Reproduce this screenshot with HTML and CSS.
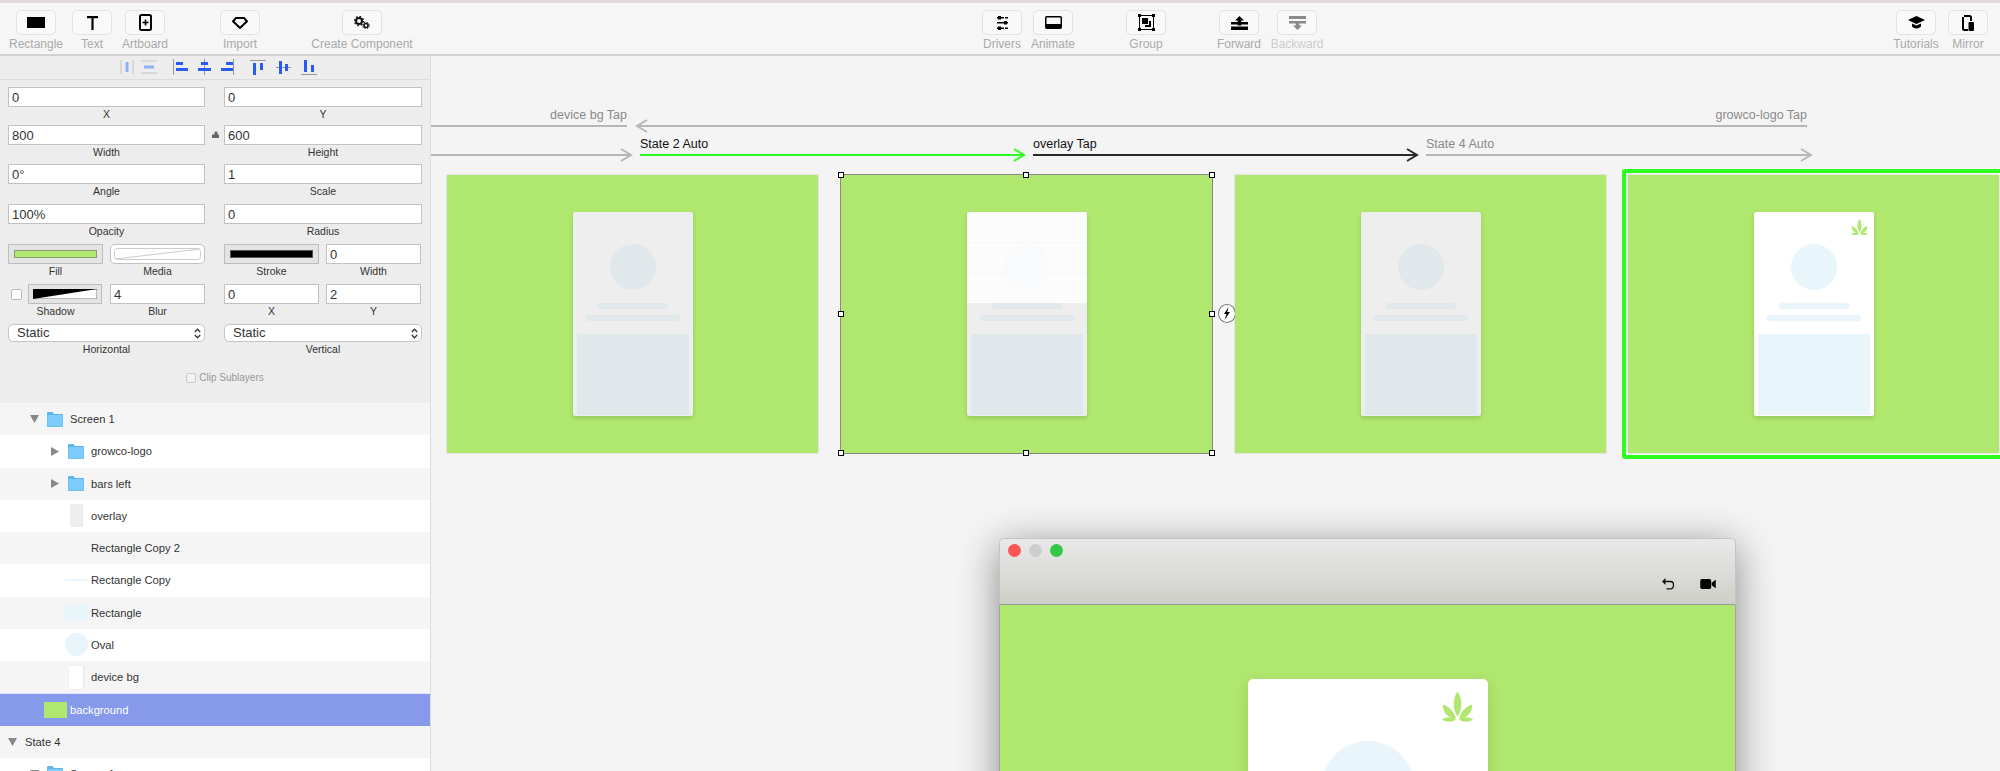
FILE: index.html
```html
<!DOCTYPE html>
<html lang="en">
<head>
    <meta charset="UTF-8">
    <title>Prototype Editor</title>
    <link rel="stylesheet" href="styles.css">
</head>
<body>
    <svg class="defs" width="0" height="0">
        <symbol id="leaf" viewBox="0 0 31 30">
            <path d="M15.5 0C20.500 7 20.500 18 15.500 25C10.500 18 10.500 7 15.500 0Z"/>
            <path d="M17 27C19 20 24 15 30 13C31 20 25 27 17 27Z"/>
            <path d="M14 27C12 20 7 15 1 13C0 20 6 27 14 27Z"/>
            <path d="M17 28C21 25 27 25 31 28C27 31 21 31 17 28Z"/>
            <path d="M14 28C10 25 4 25 0 28C4 31 10 31 14 28Z"/>
        </symbol>
        <symbol id="folder" viewBox="0 0 16 15">
            <path d="M0 1.5C0 .7.5 0 1.300 0H5.500L7 2H15C15.600 2 16 2.400 16 3V14C16 14.600 15.600 15 15 15H1C.4 15 0 14.600 0 14Z" fill="#5eb4ec"/>
            <rect x=".5" y="3" width="15" height="11.500" rx=".5" fill="#7ccbfa"/>
        </symbol>
        <symbol id="tri-down" viewBox="0 0 9 8"><path d="M0 0H9L4.500 8Z"/></symbol>
        <symbol id="tri-right" viewBox="0 0 8 9"><path d="M0 0L8 4.500L0 9Z"/></symbol>
    </svg>

    <div class="title-strip"></div>

    <!-- Top toolbar -->
    <header class="toolbar">
        <div class="tool sp-16">
            <div class="tool-btn"><svg width="18" height="11" viewBox="0 0 18 11"><rect width="18" height="11"/></svg></div>
            <span>Rectangle</span>
        </div>
        <div class="tool sp-16">
            <div class="tool-btn"><svg width="13" height="14" viewBox="0 0 13 14"><path d="M1 0H12V2.200H7.600V14H5.400V2.200H1Z"/></svg></div>
            <span>Text</span>
        </div>
        <div class="tool sp-13">
            <div class="tool-btn"><svg width="13" height="17" viewBox="0 0 13 17"><rect x="1" y="1" width="11" height="15" rx="1.500" fill="none" stroke="#000" stroke-width="2"/><path d="M5.700 5.500H7.300V7.700H9.500V9.300H7.300V11.500H5.700V9.300H3.500V7.700H5.700Z"/></svg></div>
            <span>Artboard</span>
        </div>
        <div class="tool sp-55">
            <div class="tool-btn"><svg width="16" height="12" viewBox="0 0 16 12"><path d="M4 1H12L15 4.300L8 11L1 4.300Z" fill="none" stroke="#000" stroke-width="2"/></svg></div>
            <span>Import</span>
        </div>
        <div class="tool sp-82">
            <div class="tool-btn"><svg width="16" height="13" viewBox="0 0 16 13"><circle cx="5" cy="5" r="3" fill="none" stroke="#111" stroke-width="2"/><circle cx="5" cy="5" r="4.600" fill="none" stroke="#111" stroke-width="1.300" stroke-dasharray="1.600 2"/><circle cx="12" cy="9.500" r="2" fill="none" stroke="#111" stroke-width="1.600"/><circle cx="12" cy="9.500" r="3.300" fill="none" stroke="#111" stroke-width="1" stroke-dasharray="1.300 1.300"/></svg></div>
            <span>Create Component</span>
        </div>

        <div class="tool sp-600">
            <div class="tool-btn"><svg width="11" height="14" viewBox="0 0 11 14"><path d="M1 0H4V1H7V2.500H4V3.500H1V2.500H0V1H1ZM7 5H10V6H11V7.500H10V8.500H7V7.500H0V6H7ZM1 10.500H4V11.500H7V13H4V14H1V13H0V11.500H1Z"/><path d="M8 1H11V2.500H8ZM8 11.500H11V13H8Z"/></svg></div>
            <span>Drivers</span>
        </div>
        <div class="tool sp-11">
            <div class="tool-btn"><svg width="17" height="13" viewBox="0 0 17 13"><rect x=".75" y=".75" width="15.500" height="11.500" rx="1" fill="none" stroke="#000" stroke-width="1.500"/><rect x="1" y="8" width="15" height="4"/></svg></div>
            <span>Animate</span>
        </div>
        <div class="tool sp-53">
            <div class="tool-btn"><svg width="17" height="17" viewBox="0 0 17 17"><rect x="1.500" y="1.500" width="14" height="14" fill="none" stroke="#000"/><path d="M0 0H3V3H0ZM14 0H17V3H14ZM0 14H3V17H0ZM14 14H17V17H14Z"/><rect x="4" y="4" width="6" height="6"/><path d="M11 7H13V13H7V11H11Z"/></svg></div>
            <span>Group</span>
        </div>
        <div class="tool sp-53">
            <div class="tool-btn"><svg width="17" height="14" viewBox="0 0 17 14"><path d="M8.500 0L13 4.500H10.300V6H17V8.500H10.300V9.500H6.700V8.500H0V6H6.700V4.500H4Z"/><rect y="10.500" width="17" height="3.500"/></svg></div>
            <span>Forward</span>
        </div>
        <div class="tool sp-18 tool-off">
            <div class="tool-btn"><svg width="17" height="14" viewBox="0 0 17 14"><rect width="17" height="3"/><path d="M0 5H17V7.500H10.300V9.500H13L8.500 14L4 9.500H6.700V7.500H0Z"/></svg></div>
            <span>Backward</span>
        </div>

        <div class="tool sp-579">
            <div class="tool-btn"><svg width="17" height="13" viewBox="0 0 17 13"><path d="M8.500 0L17 4L8.500 8L0 4Z"/><path d="M4 7.500L8.500 9.500L13 7.500V10.500C11 13 6 13 4 10.500Z"/></svg></div>
            <span>Tutorials</span>
        </div>
        <div class="tool sp-12">
            <div class="tool-btn"><svg width="12" height="16" viewBox="0 0 12 16"><path d="M2 1H7.500C8.500 1 9 1.500 9 2.500V6" fill="none" stroke="#000" stroke-width="2"/><path d="M1 2V13.500C1 14.500 1.500 15 2.500 15H6" fill="none" stroke="#000" stroke-width="2"/><rect x="6.500" y="7" width="5.500" height="9" rx="1"/></svg></div>
            <span>Mirror</span>
        </div>
    </header>

    <div class="workspace">
        <aside class="sidebar">
            <section class="inspector">
                <div class="align-bar">
                    <svg class="al-first off" width="14" height="16" viewBox="0 0 14 16"><path d="M1 1V15M13 1V15" stroke="#c4c4c4" fill="none"/><rect x="5.500" y="3" width="3" height="10" fill="#8fb2f5"/></svg>
                    <svg class="off" width="16" height="14" viewBox="0 0 16 14"><path d="M0 1H16M0 13H16" stroke="#c4c4c4" fill="none"/><rect x="3" y="5.500" width="10" height="3" fill="#8fb2f5"/></svg>
                    <svg class="al-gap" width="15" height="16" viewBox="0 0 15 16"><path d="M.5 0V16" stroke="#999" fill="none"/><rect x="3" y="3" width="7" height="3" fill="#2a5cf2"/><rect x="3" y="9" width="12" height="3" fill="#2a5cf2"/></svg>
                    <svg width="13" height="16" viewBox="0 0 13 16"><path d="M6.500 0V16" stroke="#999" fill="none"/><rect x="3" y="3" width="7" height="3" fill="#2a5cf2"/><rect x="0" y="9" width="13" height="3" fill="#2a5cf2"/></svg>
                    <svg width="13" height="16" viewBox="0 0 13 16"><path d="M12.500 0V16" stroke="#999" fill="none"/><rect x="5" y="3" width="7" height="3" fill="#2a5cf2"/><rect x="0" y="9" width="12" height="3" fill="#2a5cf2"/></svg>
                    <svg class="al-gap" width="16" height="15" viewBox="0 0 16 15"><path d="M0 .5H16" stroke="#999" fill="none"/><rect x="3" y="3" width="3" height="12" fill="#2a5cf2"/><rect x="10" y="3" width="3" height="7" fill="#2a5cf2"/></svg>
                    <svg width="15" height="15" viewBox="0 0 15 15"><path d="M0 7.500H15" stroke="#999" fill="none"/><rect x="3" y="1" width="3" height="13" fill="#2a5cf2"/><rect x="9" y="4" width="3" height="7" fill="#2a5cf2"/></svg>
                    <svg width="16" height="15" viewBox="0 0 16 15"><path d="M0 14.500H16" stroke="#999" fill="none"/><rect x="3" y="0" width="3" height="12" fill="#2a5cf2"/><rect x="10" y="5" width="3" height="7" fill="#2a5cf2"/></svg>
                </div>

                <div class="props">
                    <div class="prop-row row-38">
                        <label class="field"><input value="0"><span>X</span></label>
                        <label class="field"><input value="0"><span>Y</span></label>
                    </div>
                    <div class="prop-row row-39">
                        <label class="field"><input value="800"><span>Width</span></label>
                        <label class="field"><input value="600"><span>Height</span></label>
                        <svg class="lock" width="7" height="7" viewBox="0 0 7 7"><path d="M2.500 3.500V1.800C2.500 .8 3.200 .5 4 .5S5.500 .8 5.500 1.800V3.500H7V7H0V3.500Z" fill="#666"/></svg>
                    </div>
                    <div class="prop-row">
                        <label class="field"><input value="0°"><span>Angle</span></label>
                        <label class="field"><input value="1"><span>Scale</span></label>
                    </div>
                    <div class="prop-row">
                        <label class="field"><input value="100%"><span>Opacity</span></label>
                        <label class="field"><input value="0"><span>Radius</span></label>
                    </div>
                    <div class="prop-row">
                        <div class="split">
                            <div class="field"><div class="swatch"><div class="swatch-fill"></div></div><span>Fill</span></div>
                            <div class="field">
                                <div class="media-well"><svg width="87" height="12" viewBox="0 0 87 12" preserveAspectRatio="none"><rect x=".5" y=".5" width="86" height="11" rx="3" fill="#fff" stroke="#ccc"/><path d="M1 11L86 1" stroke="#ccc" fill="none"/></svg></div>
                                <span>Media</span>
                            </div>
                        </div>
                        <div class="split">
                            <div class="field"><div class="swatch"><div class="swatch-stroke"></div></div><span>Stroke</span></div>
                            <label class="field"><input value="0"><span>Width</span></label>
                        </div>
                    </div>
                    <div class="prop-row">
                        <div class="split">
                            <div class="field">
                                <div class="shadow-cell">
                                    <div class="check"></div>
                                    <div class="swatch shadow-swatch"><svg width="64" height="10" viewBox="0 0 64 10" preserveAspectRatio="none"><rect width="64" height="10" fill="#fff" stroke="#777"/><path d="M0 0H64L0 10Z"/></svg></div>
                                </div>
                                <span>Shadow</span>
                            </div>
                            <label class="field"><input value="4"><span>Blur</span></label>
                        </div>
                        <div class="split">
                            <label class="field"><input value="0"><span>X</span></label>
                            <label class="field"><input value="2"><span>Y</span></label>
                        </div>
                    </div>
                    <div class="prop-row">
                        <div class="field">
                            <div class="select">Static<svg width="7" height="11" viewBox="0 0 7 11"><path d="M.8 4L3.500 1.200L6.200 4M.8 7L3.500 9.800L6.200 7" fill="none" stroke="#333" stroke-width="1.300"/></svg></div>
                            <span>Horizontal</span>
                        </div>
                        <div class="field">
                            <div class="select">Static<svg width="7" height="11" viewBox="0 0 7 11"><path d="M.8 4L3.500 1.200L6.200 4M.8 7L3.500 9.800L6.200 7" fill="none" stroke="#333" stroke-width="1.300"/></svg></div>
                            <span>Vertical</span>
                        </div>
                    </div>
                </div>

                <div class="clip"><div class="check check-off"></div>Clip Sublayers</div>
            </section>

            <!-- Layers -->
            <ul class="layers">
                <li class="layer lvl-1"><svg class="twisty" width="9" height="8"><use href="#tri-down"/></svg><div class="layer-icon"><svg width="16" height="15"><use href="#folder"/></svg></div>Screen 1</li>
                <li class="layer lvl-2"><svg class="twisty" width="8" height="9"><use href="#tri-right"/></svg><div class="layer-icon"><svg width="16" height="15"><use href="#folder"/></svg></div>growco-logo</li>
                <li class="layer lvl-2"><svg class="twisty" width="8" height="9"><use href="#tri-right"/></svg><div class="layer-icon"><svg width="16" height="15"><use href="#folder"/></svg></div>bars left</li>
                <li class="layer lvl-2"><span class="twisty"></span><div class="layer-icon"><div class="th th-overlay"></div></div>overlay</li>
                <li class="layer lvl-2"><span class="twisty"></span><div class="layer-icon"><div class="th th-line faint"></div></div>Rectangle Copy 2</li>
                <li class="layer lvl-2"><span class="twisty"></span><div class="layer-icon"><div class="th th-line"></div></div>Rectangle Copy</li>
                <li class="layer lvl-2"><span class="twisty"></span><div class="layer-icon"><div class="th th-rect"></div></div>Rectangle</li>
                <li class="layer lvl-2"><span class="twisty"></span><div class="layer-icon"><div class="th th-oval"></div></div>Oval</li>
                <li class="layer lvl-2"><span class="twisty"></span><div class="layer-icon"><div class="th th-device"></div></div>device bg</li>
                <li class="layer lvl-1 selected"><span class="twisty"></span><div class="layer-icon"><div class="th th-bg"></div></div>background</li>
                <li class="layer lvl-0"><svg class="twisty" width="9" height="8"><use href="#tri-down"/></svg>State 4</li>
                <li class="layer lvl-1"><svg class="twisty" width="9" height="8"><use href="#tri-down"/></svg><div class="layer-icon"><svg width="16" height="15"><use href="#folder"/></svg></div>Screen 1</li>
            </ul>
        </aside>

        <main class="canvas">
            <!-- Transition arrows -->
            <svg class="links" width="1569" height="110" viewBox="0 0 1569 110" fill="none" stroke-width="2">
                <g stroke="#b7b7b7">
                    <path d="M0 71H196"/>
                    <path d="M206 71H1376M216 65L206 71L216 77"/>
                    <path d="M0 100H200M190 94L200 100L190 106"/>
                    <path d="M995 100H1380M1370 94L1380 100L1370 106"/>
                </g>
                <path d="M209 100H593M583 94L593 100L583 106" stroke="#2cff1e"/>
                <path d="M602 100H986M976 94L986 100L976 106" stroke="#2a2a2a"/>
            </svg>
            <span class="link-text to-left link-device">device bg Tap</span>
            <span class="link-text to-left link-logo">growco-logo Tap</span>
            <span class="link-text on link-state2">State 2 Auto</span>
            <span class="link-text on link-overlay">overlay Tap</span>
            <span class="link-text link-state4">State 4 Auto</span>

            <!-- Artboards -->
            <div class="artboard art-1">
                <div class="device dim">
                    <div class="circle"></div><div class="bar bar-short"></div><div class="bar bar-long"></div><div class="block"></div>
                </div>
            </div>

            <div class="artboard art-2 picked">
                <div class="device dim">
                    <div class="circle"></div><div class="bar bar-short"></div><div class="bar bar-long"></div><div class="block"></div>
                    <div class="overlay"><div class="overlay-line line-a"></div><div class="overlay-line line-b"></div><div class="overlay-circle"></div></div>
                </div>
                <i class="handle h-tl"></i><i class="handle h-tc"></i><i class="handle h-tr"></i>
                <i class="handle h-ml"></i><i class="handle h-mr"></i>
                <i class="handle h-bl"></i><i class="handle h-bc"></i><i class="handle h-br"></i>
            </div>

            <div class="bolt"><svg width="8" height="13" viewBox="0 0 8 13"><path d="M5.500 0L1 7H3.500L1.500 13L7 5H4.300Z"/></svg></div>

            <div class="artboard art-3">
                <div class="device dim">
                    <div class="circle"></div><div class="bar bar-short"></div><div class="bar bar-long"></div><div class="block"></div>
                </div>
            </div>

            <div class="active-ring"></div>
            <div class="artboard art-4">
                <div class="device">
                    <svg class="device-logo" width="17" height="16"><use href="#leaf"/></svg>
                    <div class="circle"></div><div class="bar bar-short"></div><div class="bar bar-long"></div><div class="block"></div>
                </div>
            </div>

            <!-- Preview window -->
            <div class="preview">
                <div class="preview-bar">
                    <div class="lights"><i class="light red"></i><i class="light grey"></i><i class="light green"></i></div>
                    <div class="preview-tools">
                        <svg width="13" height="12" viewBox="0 0 13 12" fill="none"><path d="M2 3.500H8.500C10.500 3.500 11.500 5 11.500 7S10.500 10.800 8.500 10.800H4.500" stroke="#111" stroke-width="1.300"/><path d="M0 3.500L3.500 0V7Z" fill="#111"/></svg>
                        <svg width="16" height="10" viewBox="0 0 17 11"><rect width="12" height="11" rx="2"/><path d="M12.500 4L17 .8V10.200L12.500 7Z"/></svg>
                    </div>
                </div>
                <div class="preview-stage">
                    <div class="preview-device">
                        <svg class="preview-logo" width="31" height="31"><use href="#leaf"/></svg>
                        <div class="preview-circle"></div>
                    </div>
                </div>
            </div>
        </main>
    </div>
</body>
</html>
```

FILE: styles.css
```css
* {
    box-sizing: border-box;
}
html, body {
    height: 100%;
}
body {
    margin: 0;
    overflow: hidden;
    font-family: "Liberation Sans", Arial, sans-serif;
    color: #333;
    background: #f4f4f4;
}
.defs {
    position: absolute;
}
.title-strip {
    height: 3px;
    background: #e0d8dc;
}

/* Toolbar */
.toolbar {
    position: relative;
    z-index: 1;
    display: flex;
    height: 53px;
    margin-bottom: -1px;
    padding-top: 7px;
    background: #f6f6f6;
    border-bottom: 2px solid #d2d2d2;
}
.tool {
    display: flex;
    flex-direction: column;
    align-items: center;
    flex: none;
    width: 40px;
    font-size: 12px;
    line-height: 14px;
    color: #aaa;
    white-space: nowrap;
}
.tool span {
    margin-top: 2px;
}
.tool-btn {
    display: flex;
    align-items: center;
    justify-content: center;
    width: 40px;
    height: 25px;
    background: #f9f9f9;
    border: 1px solid #e2e2e2;
    border-radius: 5px;
}
.tool-off svg {
    fill: #8a8a8a;
}
.tool-off span {
    color: #ccc;
}
.sp-11 { margin-left: 11px; }
.sp-12 { margin-left: 12px; }
.sp-13 { margin-left: 13px; }
.sp-16 { margin-left: 16px; }
.sp-18 { margin-left: 18px; }
.sp-53 { margin-left: 53px; }
.sp-55 { margin-left: 55px; }
.sp-82 { margin-left: 82px; }
.sp-579 { margin-left: 579px; }
.sp-600 { margin-left: 600px; }

.workspace {
    display: flex;
    height: 716px;
}

/* Sidebar */
.sidebar {
    flex: none;
    width: 431px;
    display: flex;
    flex-direction: column;
    overflow: hidden;
    background: #fff;
    border-right: 1px solid #ddd;
}
.inspector {
    flex: none;
    height: 348px;
    background: #ededed;
}
.align-bar {
    display: flex;
    align-items: center;
    gap: 10px;
    height: 25px;
    padding-left: 120px;
    border-bottom: 1px solid #dcdcdc;
}
.al-first {
    margin-right: -3px;
}
.al-gap {
    margin-left: 6px;
}
.props {
    padding: 7px 8px 0;
}
.prop-row {
    position: relative;
    display: grid;
    grid-template-columns: 197px 198px;
    column-gap: 19px;
    height: 40px;
}
.row-38 { height: 38px; }
.row-39 { height: 39px; }
.split {
    display: grid;
    grid-template-columns: 95px 95px;
    column-gap: 7px;
}
.field {
    display: flex;
    flex-direction: column;
    align-items: center;
    font-size: 10.5px;
    line-height: 14px;
    color: #333;
}
.field input {
    width: 100%;
    height: 20px;
    padding: 0 3px;
    font: 13px "Liberation Sans", Arial, sans-serif;
    color: #333;
    background: #fff;
    border: 1px solid #c2c2c2;
    border-radius: 0;
    outline: none;
}
.lock {
    position: absolute;
    left: 204px;
    top: 6px;
}
.swatch {
    display: flex;
    width: 100%;
    height: 20px;
    padding: 5px;
    background: #e4e4e4;
    border: 1px solid #bdbdbd;
}
.swatch-fill {
    flex: 1;
    background: #b0e76e;
    border: 1px solid #8a9a72;
}
.swatch-stroke {
    flex: 1;
    background: #000;
    border: 1px solid #555;
}
.media-well {
    display: flex;
    justify-content: center;
    align-items: center;
    width: 100%;
    height: 20px;
    background: #fff;
    border: 1px solid #c2c2c2;
    border-radius: 5px;
}
.shadow-cell {
    display: flex;
    align-items: center;
    gap: 6px;
    width: 100%;
    padding-left: 3px;
}
.shadow-swatch {
    width: 74px;
    padding: 4px;
    flex: none;
}
.shadow-swatch svg {
    display: block;
}
.check {
    width: 11px;
    height: 11px;
    flex: none;
    background: #fff;
    border: 1px solid #bbb;
    border-radius: 2px;
}
.select {
    display: flex;
    align-items: center;
    justify-content: space-between;
    width: 100%;
    height: 18px;
    padding: 0 3px 0 8px;
    font-size: 13px;
    color: #333;
    background: #fff;
    border: 1px solid #c6c6c6;
    border-radius: 5px;
}
.clip {
    display: flex;
    align-items: center;
    justify-content: center;
    gap: 3px;
    margin-top: 8px;
    padding-left: 20px;
    font-size: 10px;
    color: #999;
}
.check-off {
    width: 10px;
    height: 10px;
    background: #f2f2f2;
    border-color: #ccc;
}

/* Layers */
.layers {
    list-style: none;
    margin: 0;
    padding: 0;
}
.layer {
    display: flex;
    align-items: center;
    height: 32.25px;
    font-size: 11.2px;
    color: #333;
    background: #fff;
}
.layer:nth-child(odd) {
    background: #f5f5f5;
}
.layer.selected {
    color: #fff;
    background: #8799ea;
    border-top: 1px solid #dfe3f5;
}
.twisty {
    flex: none;
    margin-right: 4px;
    fill: #888;
}
span.twisty {
    width: 9px;
}
.lvl-0 {
    padding-left: 8px;
}
.lvl-0 .twisty {
    margin-right: 8px;
}
.lvl-1 {
    padding-left: 30px;
}
.lvl-2 {
    padding-left: 51px;
}
.lvl-2 svg.twisty {
    margin-right: 5px;
}
.layer-icon {
    display: flex;
    align-items: center;
    justify-content: center;
    flex: none;
    width: 24px;
    margin-right: 3px;
}
.th-overlay {
    width: 13px;
    height: 23px;
    background: #eee;
}
.th-line {
    width: 22px;
    height: 2px;
    background: #e8f5fb;
}
.th-line.faint {
    height: 1px;
    background: #f0f5f7;
}
.th-rect {
    width: 23px;
    height: 16px;
    background: #e8f5fb;
}
.th-oval {
    width: 23px;
    height: 23px;
    border-radius: 50%;
    background: #e8f5fb;
}
.th-device {
    width: 14px;
    height: 23px;
    background: #fff;
    box-shadow: 1px 0 2px #e2e2e2;
}
.th-bg {
    width: 23px;
    height: 16px;
    background: #b0e76e;
}

/* Canvas: everything here sits at its own spot on the free board */
.canvas {
    position: relative;
    flex: 1;
    overflow: hidden;
    background: #f4f4f4;
}
.links {
    position: absolute;
    left: 0;
    top: 0;
}
.link-text {
    position: absolute;
    font-size: 12.5px;
    line-height: 15px;
    color: #8a8a8a;
    white-space: nowrap;
}
.link-text.on {
    color: #111;
}
.to-left {
    transform: translateX(-100%);
}
.link-device { left: 196px; top: 53px; }
.link-logo { left: 1376px; top: 53px; }
.link-state2 { left: 209px; top: 82px; }
.link-overlay { left: 602px; top: 82px; }
.link-state4 { left: 995px; top: 82px; }

.artboard {
    position: absolute;
    top: 120px;
    width: 371px;
    height: 278px;
    padding-top: 37px;
    background: #b0e76e;
    box-shadow: 0 0 2px rgba(0, 0, 0, 0.2);
}
.art-1 { left: 16px; }
.art-2 { left: 410px; }
.art-3 { left: 804px; }
.art-4 { left: 1197px; }
.picked {
    outline: 1px solid #888;
    box-shadow: none;
}
.active-ring {
    position: absolute;
    left: 1191px;
    top: 114px;
    width: 384px;
    height: 290px;
    background: #f8f8f8;
    border: 4px solid #2cff1e;
    border-radius: 3px;
}
.device {
    position: relative;
    display: flex;
    flex-direction: column;
    align-items: center;
    width: 120px;
    height: 204px;
    margin: 0 auto;
    padding-top: 32px;
    overflow: hidden;
    background: #fff;
    border-radius: 2px;
    box-shadow: 0 2px 4px rgba(0, 0, 0, 0.15);
}
.circle {
    width: 46px;
    height: 46px;
    flex: none;
    border-radius: 50%;
    background: #e8f5fb;
}
.bar {
    height: 6px;
    flex: none;
    border-radius: 2px;
    background: #e8f5fb;
}
.bar-short {
    width: 70px;
    margin-top: 13px;
}
.bar-long {
    width: 94px;
    margin-top: 6px;
}
.block {
    width: 112px;
    height: 81px;
    flex: none;
    margin-top: 13px;
    background: #e8f5fb;
}
.device.dim {
    background: #eee;
}
.dim .circle,
.dim .bar,
.dim .block {
    background: #e0e8eb;
}
.device-logo {
    position: absolute;
    top: 7px;
    right: 6px;
    fill: #b0e76e;
}
.overlay {
    position: absolute;
    left: 0;
    top: 0;
    width: 100%;
    height: 91px;
    background: #fcfcfc;
}
.overlay-line {
    position: absolute;
    left: 0;
    width: 100%;
    height: 1px;
    background: #f1f8fa;
}
.line-a { top: 30px; }
.line-b { top: 61px; }
.overlay-circle {
    position: absolute;
    left: 37px;
    top: 32px;
    width: 46px;
    height: 46px;
    border-radius: 50%;
    background: #f8fafb;
}
.handle {
    position: absolute;
    width: 6px;
    height: 6px;
    background: #fff;
    border: 1px solid #000;
}
.h-tl { left: -3px; top: -3px; }
.h-tc { left: 182px; top: -3px; }
.h-tr { right: -3px; top: -3px; }
.h-ml { left: -3px; top: 136px; }
.h-mr { right: -3px; top: 136px; }
.h-bl { left: -3px; bottom: -3px; }
.h-bc { left: 182px; bottom: -3px; }
.h-br { right: -3px; bottom: -3px; }
.bolt {
    position: absolute;
    left: 787px;
    top: 249px;
    display: flex;
    align-items: center;
    justify-content: center;
    width: 18px;
    height: 19px;
    background: #fff;
    border: 1px solid #777;
    border-radius: 50%;
}

/* Preview window */
.preview {
    position: absolute;
    left: 568px;
    top: 483px;
    width: 737px;
    height: 420px;
    border-radius: 5px 5px 0 0;
    box-shadow: 0 8px 40px rgba(0, 0, 0, 0.45);
}
.preview-bar {
    display: flex;
    flex-direction: column;
    justify-content: space-between;
    height: 67px;
    padding: 5px 19px 14px 8px;
    background: linear-gradient(#e9e9e9, #cfcfc9);
    border: 1px solid #c4c4c4;
    border-bottom-color: #9a9a9a;
    border-radius: 5px 5px 0 0;
}
.lights {
    display: flex;
    gap: 8px;
}
.light {
    width: 13px;
    height: 13px;
    border-radius: 50%;
}
.red { background: #fc5753; }
.grey { background: #cdcdcd; }
.green { background: #33c748; }
.preview-tools {
    display: flex;
    justify-content: flex-end;
    align-items: center;
    gap: 25px;
}
.preview-stage {
    height: 353px;
    padding-top: 74px;
    background: #b0e76e;
    border: solid #a2a2a2;
    border-width: 0 1px;
}
.preview-device {
    position: relative;
    width: 240px;
    height: 408px;
    margin: 0 auto;
    padding-top: 62px;
    background: #fff;
    border-radius: 5px;
    box-shadow: 0 4px 14px rgba(0, 0, 0, 0.12);
}
.preview-logo {
    position: absolute;
    top: 12px;
    right: 15px;
    fill: #b0e76e;
}
.preview-circle {
    width: 92px;
    height: 92px;
    margin: 0 auto;
    border-radius: 50%;
    background: #e8f5fb;
}
```
